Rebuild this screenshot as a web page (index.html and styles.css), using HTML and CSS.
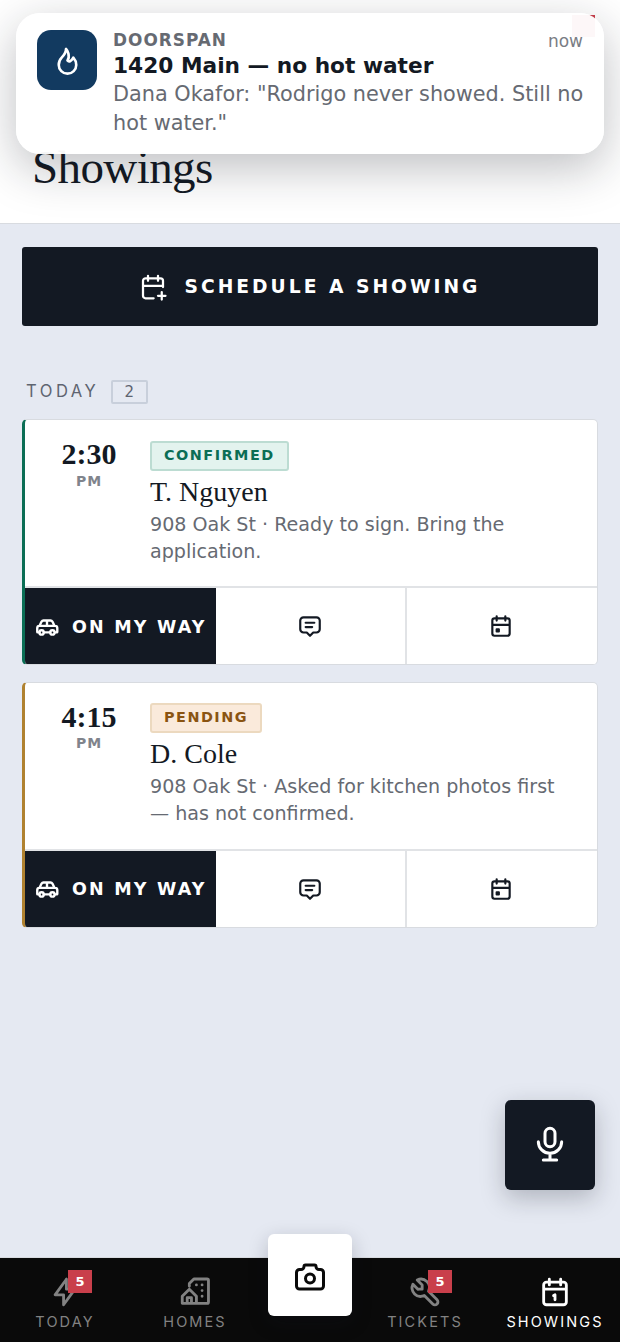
FILE: index.html
```html
<!DOCTYPE html>
<html lang="en">
<head>
<meta charset="utf-8">
<title>Showings</title>
<link rel="stylesheet" href="styles.css">
</head>
<body>
<div class="app">
  <header class="top">
    <span class="bell"></span>
    <h1 class="title">Showings</h1>
  </header>
  <main class="main">
    <button class="schedule">
      <svg class="ico ico-sched" viewBox="0 0 24 24"><path d="M12.500 21h-6.500a2 2 0 0 1 -2 -2v-12a2 2 0 0 1 2 -2h12a2 2 0 0 1 2 2v5M16 3v4M8 3v4M4 11h16M16 19h6M19 16v6"/></svg>
      <span>SCHEDULE A SHOWING</span>
    </button>
    <div class="section"><span class="section-name">TODAY</span><span class="count">2</span></div>
    <article class="card card-green">
      <div class="card-body">
        <div class="time"><div class="clock">2:30</div><div class="ampm">PM</div></div>
        <div class="info">
          <span class="pill pill-green">CONFIRMED</span>
          <div class="name">T. Nguyen</div>
          <p class="note">908 Oak St · Ready to sign. Bring the application.</p>
        </div>
      </div>
      <div class="actions">
        <button class="way"><svg class="ico ico-car" viewBox="0 0 24 24"><path d="M5 17h-1.500a.5 .5 0 0 1 -.5 -.5v-3.500a2 2 0 0 1 2 -2l2 -4a2 2 0 0 1 1.800 -1h6.400a2 2 0 0 1 1.800 1l2 4h.5a2 2 0 0 1 2 2v3.500a.5 .5 0 0 1 -.5 .5h-1.500M9 17h6M5 11h14M12 6v5"/><circle cx="7" cy="17" r="2"/><circle cx="17" cy="17" r="2"/></svg><span>ON MY WAY</span></button>
        <button class="act"><svg class="ico ico-act" viewBox="0 0 24 24"><path d="M8 9h8M8 13h6M9 18h-3a3 3 0 0 1 -3 -3v-8a3 3 0 0 1 3 -3h12a3 3 0 0 1 3 3v8a3 3 0 0 1 -3 3h-3l-3 3l-3 -3z"/></svg></button>
        <button class="act"><svg class="ico ico-act" viewBox="0 0 24 24"><path d="M4 7a2 2 0 0 1 2 -2h12a2 2 0 0 1 2 2v12a2 2 0 0 1 -2 2h-12a2 2 0 0 1 -2 -2zM16 3v4M8 3v4M4 11h16M8 15h2v2h-2z"/></svg></button>
      </div>
    </article>
    <article class="card card-amber">
      <div class="card-body">
        <div class="time"><div class="clock">4:15</div><div class="ampm">PM</div></div>
        <div class="info">
          <span class="pill pill-amber">PENDING</span>
          <div class="name">D. Cole</div>
          <p class="note">908 Oak St · Asked for kitchen photos first — has not confirmed.</p>
        </div>
      </div>
      <div class="actions">
        <button class="way"><svg class="ico ico-car" viewBox="0 0 24 24"><path d="M5 17h-1.500a.5 .5 0 0 1 -.5 -.5v-3.500a2 2 0 0 1 2 -2l2 -4a2 2 0 0 1 1.800 -1h6.400a2 2 0 0 1 1.800 1l2 4h.5a2 2 0 0 1 2 2v3.500a.5 .5 0 0 1 -.5 .5h-1.500M9 17h6M5 11h14M12 6v5"/><circle cx="7" cy="17" r="2"/><circle cx="17" cy="17" r="2"/></svg><span>ON MY WAY</span></button>
        <button class="act"><svg class="ico ico-act" viewBox="0 0 24 24"><path d="M8 9h8M8 13h6M9 18h-3a3 3 0 0 1 -3 -3v-8a3 3 0 0 1 3 -3h12a3 3 0 0 1 3 3v8a3 3 0 0 1 -3 3h-3l-3 3l-3 -3z"/></svg></button>
        <button class="act"><svg class="ico ico-act" viewBox="0 0 24 24"><path d="M4 7a2 2 0 0 1 2 -2h12a2 2 0 0 1 2 2v12a2 2 0 0 1 -2 2h-12a2 2 0 0 1 -2 -2zM16 3v4M8 3v4M4 11h16M8 15h2v2h-2z"/></svg></button>
      </div>
    </article>
  </main>
  <nav class="nav">
    <a class="tab"><span class="tab-icon"><svg class="ico ico-tab" viewBox="0 0 24 24"><path d="M13 3v7h6l-8 11v-7h-6l8 -11"/></svg><span class="badge">5</span></span><span class="tab-label">TODAY</span></a>
    <a class="tab"><span class="tab-icon"><svg class="ico ico-tab" viewBox="0 0 24 24"><path d="M3 20v-5l5 -5l5 5v5zM6.500 20v-4h3v4M8 8v-2l3.200 -3.200h9.300a1 1 0 0 1 1 1v15.200a1 1 0 0 1 -1 1h-7.500M13 7v.01M17 7v.01M17 11v.01M17 15v.01"/></svg></span><span class="tab-label">HOMES</span></a>
    <span class="tab-gap"></span>
    <a class="tab"><span class="tab-icon"><svg class="ico ico-tab" viewBox="0 0 24 24"><path d="M7 10h3v-3l-3.500 -3.500a6 6 0 0 1 8 8l6 6a2 2 0 0 1 -3 3l-6 -6a6 6 0 0 1 -8 -8l3.500 3.500"/></svg><span class="badge">5</span></span><span class="tab-label">TICKETS</span></a>
    <a class="tab tab-on"><span class="tab-icon"><svg class="ico ico-tab" viewBox="0 0 24 24"><path d="M4 7a2 2 0 0 1 2 -2h12a2 2 0 0 1 2 2v12a2 2 0 0 1 -2 2h-12a2 2 0 0 1 -2 -2zM16 3v4M8 3v4M4 10h16M11 14.500l1 -.5v3.500"/></svg></span><span class="tab-label">SHOWINGS</span></a>
  </nav>
  <button class="camera"><svg class="ico ico-cam" viewBox="0 0 24 24"><path d="M5 7h1a2 2 0 0 0 2 -2a1 1 0 0 1 1 -1h6a1 1 0 0 1 1 1a2 2 0 0 0 2 2h1a2 2 0 0 1 2 2v9a2 2 0 0 1 -2 2h-14a2 2 0 0 1 -2 -2v-9a2 2 0 0 1 2 -2M9 13a3 3 0 1 0 6 0a3 3 0 0 0 -6 0"/></svg></button>
  <button class="mic"><svg class="ico ico-mic" viewBox="0 0 24 24"><path d="M9 5a3 3 0 0 1 3 -3a3 3 0 0 1 3 3v5a3 3 0 0 1 -3 3a3 3 0 0 1 -3 -3zM5 10a7 7 0 0 0 14 0M8 21h8M12 17v4"/></svg></button>
  <aside class="toast">
    <div class="toast-logo"><svg class="ico ico-flame" viewBox="0 0 24 24"><path d="M12 12c2 -2.960 0 -7 -1 -8c0 3.038 -1.773 4.741 -3 6c-1.226 1.260 -2 3.240 -2 5a6 6 0 1 0 12 0c0 -1.532 -1.056 -3.940 -2 -5c-1.786 3 -2.791 3 -4 2z"/></svg></div>
    <div class="toast-text">
      <div class="toast-app">DOORSPAN</div>
      <div class="toast-title">1420 Main — no hot water</div>
      <div class="toast-msg">Dana Okafor: "Rodrigo never showed. Still no hot water."</div>
    </div>
    <span class="toast-time">now</span>
  </aside>
</div>
</body>
</html>
```
FILE: styles.css
```css
* { box-sizing: border-box; }
html, body { margin: 0; padding: 0; }
body { font-family: "DejaVu Sans", sans-serif; color: #131923; }
button { font: inherit; border: 0; padding: 0; cursor: pointer; }
.app { position: relative; width: 620px; height: 1342px; overflow: hidden; display: flex; flex-direction: column; background: #e5e9f2; }
.ico { display: block; fill: none; stroke: currentColor; stroke-width: 2; stroke-linecap: round; stroke-linejoin: round; flex: none; }
.ico-sched { width: 30px; height: 30px; stroke-width: 1.800; }
.ico-car { width: 26px; height: 26px; stroke-width: 2.200; }
.ico-act { width: 26px; height: 26px; }
.ico-tab { width: 34px; height: 34px; stroke-width: 2; }
.ico-cam { width: 36px; height: 36px; stroke-width: 2; }
.ico-mic { width: 40px; height: 40px; stroke-width: 1.800; }
.ico-flame { width: 35px; height: 35px; stroke-width: 1.800; }

.top { position: relative; height: 224px; background: #fff; border-bottom: 1px solid #d8dbe0; padding: 142px 32px 0; flex: none; }
.title { margin: 0; font-family: "Liberation Serif", serif; font-weight: 400; font-size: 47px; line-height: 50px; letter-spacing: -0.6px; color: #131923; }
.bell { position: absolute; top: 15px; right: 25px; width: 23px; height: 22px; background: #c93f4b; }

.main { flex: 1; padding: 23px 22px 0; }
.schedule { width: 576px; height: 79px; display: flex; align-items: center; justify-content: center; gap: 17px; padding-right: 2px; background: #131923; color: #fff; border-radius: 3px; font-weight: 700; font-size: 18.700px; letter-spacing: 3px; }
.section { display: flex; align-items: center; gap: 11.500px; margin: 54px 0 15px 4px; height: 24px; }
.section-name { font-family: "Inter", sans-serif; font-size: 16.600px; letter-spacing: 3.500px; padding-bottom: 2px; color: #5e6470; }
.count { width: 37px; height: 24px; display: flex; align-items: center; justify-content: center; border: 2px solid #c8cfdb; border-radius: 2px; font-size: 15px; color: #5e6470; }

.card { background: #fff; border: 1px solid #d8dbe0; border-left-width: 3px; border-radius: 5px; overflow: hidden; margin-bottom: 16.500px; height: 246px; }
.card-green { border-left-color: #0b6e55; }
.card-amber { border-left-color: #b08230; }
.card-body { display: flex; height: 168px; padding: 19.300px 0 0 0; border-bottom: 2px solid #e1e3e6; }
.time { width: 125px; padding-left: 3px; text-align: center; flex: none; }
.clock { font-family: "Liberation Serif", serif; font-weight: 700; font-size: 30px; line-height: 30px; color: #131923; }
.ampm { font-weight: 700; font-size: 14px; line-height: 20px; margin-top: 1.500px; letter-spacing: 1px; color: #80848c; }
.info { flex: 1; padding: 1.500px 25px 0 0; }
.pill { display: inline-block; height: 30px; padding: 0 12px; border: 2px solid; border-radius: 3px; font-weight: 700; font-size: 14.400px; line-height: 24px; letter-spacing: 1.500px; }
.pill-green { background: #e3f3ee; border-color: #bcdcd2; color: #0b6e55; }
.pill-amber { background: #faeadb; border-color: #ecd9bf; color: #8a5412; }
.name { font-family: "Liberation Serif", serif; font-size: 28px; line-height: 36px; margin-top: 3px; color: #131923; }
.note { margin: 1px 0 0; font-size: 19.100px; line-height: 27px; color: #666a72; }
.actions { display: flex; height: 76px; }
.way { width: 191px; display: flex; align-items: center; justify-content: center; gap: 11.500px; padding-top: 1px; background: #131923; color: #fff; font-weight: 700; font-size: 17.500px; letter-spacing: 2.200px; flex: none; }
.act { width: 189px; flex: none; display: flex; align-items: center; justify-content: center; padding-right: 1px; background: #fff; color: #131923; }
.act + .act { width: 191px; border-left: 2px solid #e1e3e6; }

.nav { display: flex; height: 85px; flex: none; background: #0a0a0a; border-top: 1px solid #d8dbe0; }
.tab { flex: 1; display: flex; flex-direction: column; align-items: center; padding-top: 17px; color: #828282; }
.tab-on { color: #fff; }
.tab-gap { width: 100px; flex: none; }
.tab-icon { position: relative; display: block; width: 34px; height: 34px; }
.tab-label { font-family: "Inter", sans-serif; font-size: 14.500px; line-height: 18px; letter-spacing: 2.100px; margin-top: 4px; }
.badge { position: absolute; top: -5px; left: 20px; width: 24px; height: 23px; background: #c93f4b; color: #fff; font-size: 13px; font-weight: 700; line-height: 23px; text-align: center; }

.camera { position: absolute; left: 268px; top: 1234px; width: 84px; height: 82px; padding-top: 3px; display: flex; align-items: center; justify-content: center; background: #fff; color: #0a0a0a; border-radius: 6px; box-shadow: 0 6px 20px rgba(20, 25, 36, .22); }
.mic { position: absolute; left: 505px; top: 1100px; width: 90px; height: 90px; display: flex; align-items: center; justify-content: center; background: #131923; color: #fff; border-radius: 6px; box-shadow: 0 8px 24px rgba(20, 25, 36, .25); }

.toast { position: absolute; left: 16px; top: 13px; width: 588px; height: 141px; display: flex; align-items: flex-start; background: rgba(255, 255, 255, .96); border-radius: 24px; box-shadow: 0 14px 48px rgba(20, 25, 36, .28); padding: 17px 0 0 21px; }
.toast-logo { width: 60px; height: 60px; display: flex; align-items: center; justify-content: center; background: #123a60; color: #fff; border-radius: 14px; flex: none; }
.toast-text { margin: 0 0 0 16px; flex: 1; }
.toast-app { font-size: 16.900px; font-weight: 700; line-height: 21px; letter-spacing: 1px; color: #666a72; }
.toast-title { font-size: 21.700px; font-weight: 700; line-height: 29px; color: #131923; }
.toast-msg { font-size: 20.800px; line-height: 28.800px; color: #666a72; }
.toast-time { position: absolute; top: 18px; right: 21px; font-size: 17px; line-height: 20px; color: #7a7d84; }
```
